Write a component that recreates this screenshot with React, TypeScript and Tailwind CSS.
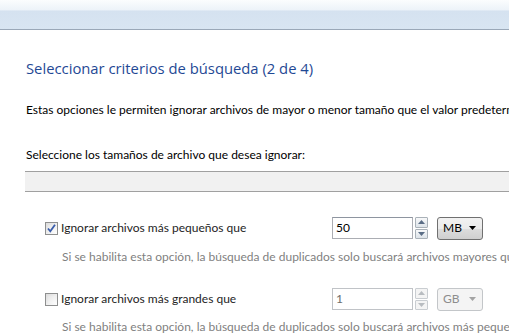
import React from 'react';

const body = { fontFamily: '"Segoe UI", Lato, sans-serif' };
const heading = { fontFamily: '"Segoe UI", "Open Sans", sans-serif' };

const Checkbox: React.FC<{ checked?: boolean }> = ({ checked }) => (
  <div className="w-[13px] h-[13px] border border-[#8e8f8f] bg-[linear-gradient(135deg,#dcdcdc,#ffffff)] p-[2px] shrink-0">
    <div className="w-full h-full bg-[linear-gradient(135deg,#e6e6e6,#fbfbfb)] relative">
      {checked && (
        <svg className="absolute -left-[2px] -top-[2px]" width="11" height="11" viewBox="0 0 11 11">
          <path d="M2 5.5 L4.3 8.3 L9 1.8" fill="none" stroke="#3a5dab" strokeWidth="1.8" />
        </svg>
      )}
    </div>
  </div>
);

const Spinner: React.FC<{ disabled?: boolean }> = ({ disabled }) => {
  const arrow = disabled ? '#b8bcc0' : '#5a6d86';
  const btn = disabled
    ? 'border-[#c9cdd1] bg-[#f4f4f4]'
    : 'border-[#a9b1b8] bg-[linear-gradient(to_bottom,#f8f9fa,#dde3e9)]';
  return (
    <div className="flex flex-col gap-[1px] w-[13px] h-[22px] ml-[2px]">
      <div className={`flex-1 border rounded-[1px] flex items-center justify-center ${btn}`}>
        <svg width="7" height="4" viewBox="0 0 7 4"><path d="M0 4 L3.5 0 L7 4 Z" fill={arrow} /></svg>
      </div>
      <div className={`flex-1 border rounded-[1px] flex items-center justify-center ${btn}`}>
        <svg width="7" height="4" viewBox="0 0 7 4"><path d="M0 0 L7 0 L3.5 4 Z" fill={arrow} /></svg>
      </div>
    </div>
  );
};

const SizeRow: React.FC<{
  label: string;
  value: string;
  unit: string;
  checked?: boolean;
}> = ({ label, value, unit, checked }) => (
  <div className="flex items-center h-[22px] pl-[45px]">
    <div className="w-[287px] flex items-center gap-[3px]">
      <Checkbox checked={checked} />
      <span className="text-[12px] text-[#1e1e1e] leading-[16px]">{label}</span>
    </div>
    <div
      className={`w-[81px] h-[22px] border flex items-center px-[3px] text-[12px] ${
        checked
          ? 'border-[#abadb3] border-t-[#8e95a0] bg-white text-black'
          : 'border-[#c0c3c7] bg-white text-[#6d6d6d]'
      }`}
    >
      {value}
    </div>
    <Spinner disabled={!checked} />
    <div
      className={`ml-[9px] w-[46px] h-[23px] rounded-[3px] border flex items-center justify-between pl-[5px] pr-[6px] text-[12px] ${
        checked
          ? 'border-[#707070] bg-[linear-gradient(to_bottom,#f2f2f2_0%,#ebebeb_50%,#dddddd_51%,#cfcfcf_100%)] text-black'
          : 'border-[#c3c6c9] bg-[#f4f4f4] text-[#8d8d8d]'
      }`}
    >
      <span>{unit}</span>
      <svg width="7" height="4" viewBox="0 0 7 4">
        <path d="M0 0 L7 0 L3.5 4 Z" fill={checked ? '#000' : '#a3a3a3'} />
      </svg>
    </div>
  </div>
);

export default function App() {
  return (
    <div className="w-[509px] h-[334px] overflow-hidden bg-white whitespace-nowrap" style={body}>
      <div className="h-[30px] border-b border-[#9aa8b8] bg-[linear-gradient(to_bottom,#fbfdfe_0%,#edf3f9_34%,#d5e2f0_38%,#d8e5f2_100%)]" />

      <div className="pl-[26px] mt-[28px] text-[14.8px] leading-[20px] text-[#1f4995]" style={heading}>
        Seleccionar criterios de búsqueda (2 de 4)
      </div>

      <div className="pl-[26px] mt-[24px] text-[12px] leading-[16px] text-black">
        Estas opciones le permiten ignorar archivos de mayor o menor tamaño que el valor predeterminado.
      </div>

      <div className="pl-[26px] mt-[29px] text-[12px] leading-[16px] text-black">
        Seleccione los tamaños de archivo que desea ignorar:
      </div>

      <div className="ml-[25px] mt-[8px] h-[21px] border-y border-[#a0a0a0] bg-[#f1f1f1]" />

      <div className="mt-[25px]">
        <SizeRow label="Ignorar archivos más pequeños que" value="50" unit="MB" checked />
      </div>
      <div className="pl-[62px] mt-[10px] text-[12px] leading-[16px] text-[#7f7f7f]">
        Si se habilita esta opción, la búsqueda de duplicados solo buscará archivos mayores que el valor indicado.
      </div>

      <div className="mt-[23px]">
        <SizeRow label="Ignorar archivos más grandes que" value="1" unit="GB" />
      </div>
      <div className="pl-[62px] mt-[9px] text-[12px] leading-[16px] text-[#7f7f7f]">
        Si se habilita esta opción, la búsqueda de duplicados solo buscará archivos más pequeños que el valor indicado.
      </div>
    </div>
  );
}
